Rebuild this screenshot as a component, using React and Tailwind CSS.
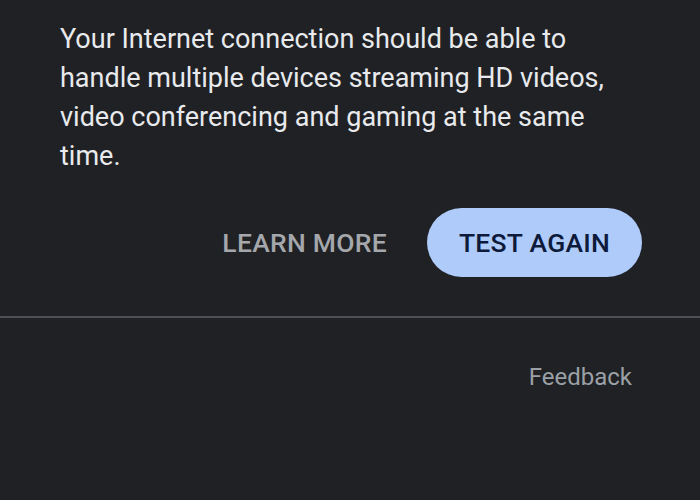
import React from 'react';

const App = () => {
  return (
    <div className="w-[700px] h-[500px] bg-[#202124] overflow-hidden font-['Roboto','Liberation_Sans',sans-serif]">
      {/* Result description */}
      <div className="pl-[60px] pt-[20px]">
        <p className="text-[27px] leading-[39px] text-[#e8eaed] w-[580px]">
          Your Internet connection should be able to handle multiple devices streaming HD videos, video conferencing and gaming at the same time.
        </p>
      </div>

      {/* Actions */}
      <div className="mt-[32px] pr-[58px] flex items-center justify-end gap-[40px]">
        <button className="text-[26.5px] font-medium text-[#a4a7ab] tracking-[0.01em]">LEARN MORE</button>
        <button className="w-[215px] h-[69px] rounded-full bg-[#aecbfa] text-[26.5px] font-medium text-[#0d1a3a] tracking-[0.01em]">
          TEST AGAIN
        </button>
      </div>

      <div className="mt-[39px] h-[2px] bg-[#4d5054]" />

      {/* Footer */}
      <div className="mt-[45px] pr-[68px] flex justify-end">
        <span className="text-[24px] leading-[28px] text-[#9aa0a6]">Feedback</span>
      </div>
    </div>
  );
};

export default App;
